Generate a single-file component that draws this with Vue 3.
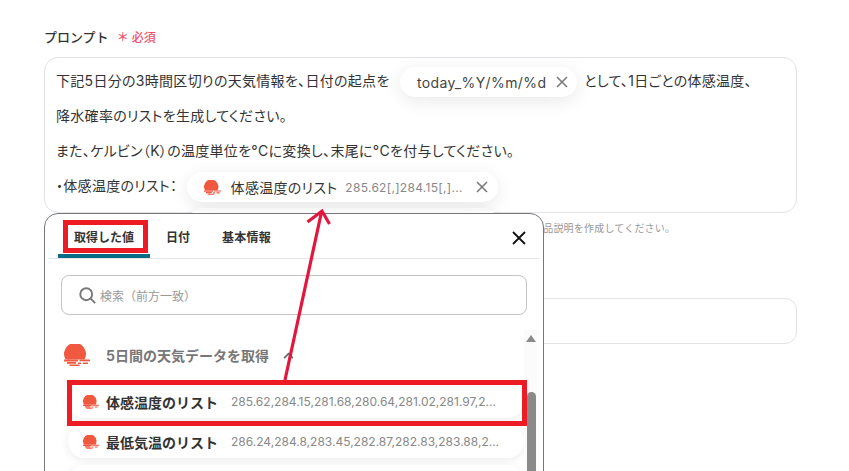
<script setup>
const tabs = [
  { label: '取得した値', active: true },
  { label: '日付', active: false },
  { label: '基本情報', active: false },
]
const items = [
  { name: '体感温度のリスト', value: '285.62,284.15,281.68,280.64,281.02,281.97,2...' },
  { name: '最低気温のリスト', value: '286.24,284.8,283.45,282.87,282.83,283.88,2...' },
  { name: '', value: '' },
]
</script>

<template>
  <div class="page">
    <svg width="0" height="0" class="defs">
      <symbol id="sun" viewBox="0 0 26 22">
        <path d="M1.6 15.5A11 11 0 1 1 20.4 15.5z" fill="#f0583f" />
        <path d="M0 15.5h14v2H0zM15.5 15.5h10.5v1.7H15.5zM3 18h9v1.8H3zM14 18.4h3v1.6h-3zM19 18.4h5v1.6h-5zM5.5 20.4h10V22h-10z" fill="#f0583f" />
      </symbol>
    </svg>

    <div class="label-row">
      <span class="label">プロンプト</span>
      <span class="required">＊ 必須</span>
    </div>

    <div class="editor">
      <div class="line">
        下記5日分の3時間区切りの天気情報を、日付の起点を
        <span class="chip chip-date">
          <span class="chip-date-text">today_%Y/%m/%d</span>
          <svg class="chip-x" viewBox="0 0 12 12"><path d="M1 1l10 10M11 1L1 11" /></svg>
        </span>
        として、1日ごとの体感温度、
      </div>
      <div class="line">降水確率のリストを生成してください。</div>
      <div class="line">また、ケルビン（K）の温度単位を°Cに変換し、末尾に°Cを付与してください。</div>
      <div class="line">
        ・体感温度のリスト：
        <span class="chip chip-var">
          <svg class="sun-small"><use href="#sun" /></svg>
          <span class="chip-name">体感温度のリスト</span>
          <span class="chip-value">285.62[,]284.15[,]...</span>
          <svg class="chip-x" viewBox="0 0 12 12"><path d="M1 1l10 10M11 1L1 11" /></svg>
        </span>
      </div>
      <span class="ghost-chip"></span>
    </div>

    <p class="hint">商品説明を作成してください。</p>
    <div class="second-input"></div>

    <section class="popup">
      <div class="popup-head">
        <button v-for="t in tabs" :key="t.label" class="tab" :class="{ active: t.active }">{{ t.label }}</button>
        <svg class="close" viewBox="0 0 14 14"><path d="M1 1l12 12M13 1L1 13" /></svg>
      </div>
      <div class="search">
        <svg class="search-icon" viewBox="0 0 16 16"><circle cx="6.8" cy="6.8" r="5.6" /><path d="M11 11l4.2 4.2" /></svg>
        <span>検索（前方一致）</span>
      </div>
      <div class="list-wrap">
        <div class="list">
          <div class="group">
            <svg class="sun-big"><use href="#sun" /></svg>
            <span class="group-name">5日間の天気データを取得</span>
            <svg class="chev" viewBox="0 0 12 8"><path d="M1 7l5-5 5 5" /></svg>
          </div>
          <div v-for="(it, i) in items" :key="i" class="item">
            <template v-if="it.name">
              <svg class="sun-item"><use href="#sun" /></svg>
              <span class="item-name">{{ it.name }}</span>
              <span class="item-value">{{ it.value }}</span>
            </template>
          </div>
        </div>
        <div class="scrollbar">
          <span class="sb-up"></span>
          <span class="sb-thumb"></span>
        </div>
      </div>
    </section>

    <div class="mark mark-tab"></div>
    <div class="mark mark-item"></div>
    <svg class="arrow" viewBox="0 0 849 471">
      <path d="M285 380L321.5 212M307.5 222L322 211L329.5 224" />
    </svg>
  </div>
</template>

<style>
html, body { margin: 0; background: #fff; }
</style>

<style scoped>
.page {
  position: relative;
  width: 849px;
  height: 471px;
  overflow: hidden;
  padding: 27px 52px 0 44px;
  box-sizing: border-box;
  font-family: Inter, "Noto Sans CJK JP", sans-serif;
  color: #333;
  background: #fff;
}
.defs { position: absolute; }
.label-row { display: flex; align-items: center; gap: 8px; height: 18px; margin-bottom: 12px; }
.label { font-size: 13px; font-weight: 500; color: #333; }
.required { font-size: 12px; font-weight: 500; color: #f0506e; }
.editor {
  position: relative;
  height: 156px;
  box-sizing: border-box;
  padding: 5px 11px 0;
  border: 1px solid #e2e2e8;
  border-radius: 14px;
  font-size: 14px;
  letter-spacing: 0.3px;
  font-feature-settings: "palt";
}
.line { height: 35px; line-height: 35px; white-space: nowrap; color: #333; }
.chip {
  display: inline-flex;
  align-items: center;
  height: 30px;
  box-sizing: border-box;
  vertical-align: middle;
  background: #fff;
  border-radius: 15px;
  box-shadow: 0 4px 18px rgba(0, 0, 0, 0.09);
  position: relative;
  z-index: 1;
}
.chip-date { width: 177px; padding: 0 9px 0 17px; margin: 0 3px 0 6px; justify-content: space-between; }
.chip-date-text { font-size: 14px; letter-spacing: 0.4px; color: #444; }
.chip-x { width: 12px; height: 12px; fill: none; stroke: #777; stroke-width: 1.5; }
.chip-var { width: 311px; padding: 0 10px 0 17px; margin-left: 5px; }
.sun-small { width: 17px; height: 15px; flex: none; }
.chip-name { margin-left: 10px; font-size: 14px; color: #333; }
.chip-value { margin-left: 8px; font-size: 12px; color: #888; letter-spacing: 0.3px; flex: 1; white-space: nowrap; }
.ghost-chip {
  position: absolute;
  left: 143px;
  top: 150px;
  width: 310px;
  height: 30px;
  background: #fff;
  border-radius: 15px;
  box-shadow: 0 0 10px rgba(0, 0, 0, 0.06);
}
.hint { margin: 8px 0 0; padding-left: 489px; height: 14px; line-height: 14px; font-size: 10px; letter-spacing: 0.2px; color: #999; }
.second-input {
  margin-top: 63px;
  height: 46px;
  border: 1px solid #e2e2e8;
  border-radius: 12px;
  box-sizing: border-box;
}
.popup {
  position: absolute;
  left: 44px;
  top: 213px;
  width: 500px;
  height: 300px;
  box-sizing: border-box;
  background: #fff;
  border: 1px solid #777;
  border-radius: 14px;
  z-index: 2;
}
.popup-head {
  display: flex;
  align-items: stretch;
  height: 44px;
  margin: 0 4px;
  padding-left: 9px;
  border-bottom: 1px solid #e4e4ea;
  position: relative;
}
.tab {
  padding: 5px 16px 0;
  border: 0;
  border-bottom: 4px solid transparent;
  background: none;
  font: 700 12px Inter, "Noto Sans CJK JP", sans-serif;
  color: #333;
}
.tab:last-of-type { letter-spacing: 0.25px; }
.tab.active { border-bottom-color: #0b6a84; }
.close {
  position: absolute;
  right: 13px;
  top: 17px;
  width: 14px;
  height: 14px;
  fill: none;
  stroke: #111;
  stroke-width: 1.8;
}
.search {
  display: flex;
  align-items: center;
  gap: 4px;
  width: 466px;
  height: 40px;
  box-sizing: border-box;
  margin: 16px 0 0 16px;
  padding-left: 17px;
  border: 1px solid #c4c4c4;
  border-radius: 8px;
  font-size: 12px;
  color: #999;
}
.search-icon { width: 17px; height: 17px; fill: none; stroke: #777; stroke-width: 1.8; }
.list-wrap { display: flex; margin-top: 15px; height: 142px; overflow: hidden; }
.list { width: 479px; flex: none; }
.group { display: flex; align-items: center; height: 22px; margin: 14px 0 0 19px; }
.sun-big { width: 26px; height: 22px; flex: none; }
.group-name { margin-left: 16px; font-size: 14px; font-weight: 700; color: #777; }
.chev { width: 11px; height: 7px; margin-left: 14px; fill: none; stroke: #666; stroke-width: 2; }
.item {
  display: flex;
  align-items: center;
  height: 33px;
  margin: 7px 0 0 23px;
  width: 456px;
  padding-left: 15px;
  box-sizing: border-box;
  background: #fff;
  border-radius: 16px;
  box-shadow: 0 2px 8px rgba(0, 0, 0, 0.08);
  overflow: hidden;
  white-space: nowrap;
}
.group + .item { margin-top: 19px; }
.sun-item { width: 16px; height: 14px; flex: none; }
.item-name { margin-left: 7px; font-size: 14px; font-weight: 700; color: #333; }
.item-value { margin-left: 13px; font-size: 12px; color: #888; }
.scrollbar { position: relative; flex: none; width: 15px; height: 142px; background: #fbfbfb; }
.sb-up {
  position: absolute;
  left: 2px;
  top: 5px;
  border: 5px solid transparent;
  border-top: 0;
  border-bottom: 7px solid #8a8a8a;
}
.sb-thumb {
  position: absolute;
  left: 3px;
  top: 62px;
  width: 9px;
  height: 90px;
  border-radius: 5px 5px 0 0;
  background: #8a8a8a;
}
.mark { position: absolute; box-sizing: border-box; z-index: 3; border: 5px solid #ed1c24; }
.mark-tab { left: 63px; top: 220px; width: 85px; height: 33px; }
.mark-item { left: 67px; top: 380px; width: 460px; height: 46px; }
.arrow {
  position: absolute;
  left: 0;
  top: 0;
  width: 849px;
  height: 471px;
  z-index: 3;
  fill: none;
  stroke: #e2173d;
  stroke-width: 3.2;
}
</style>
